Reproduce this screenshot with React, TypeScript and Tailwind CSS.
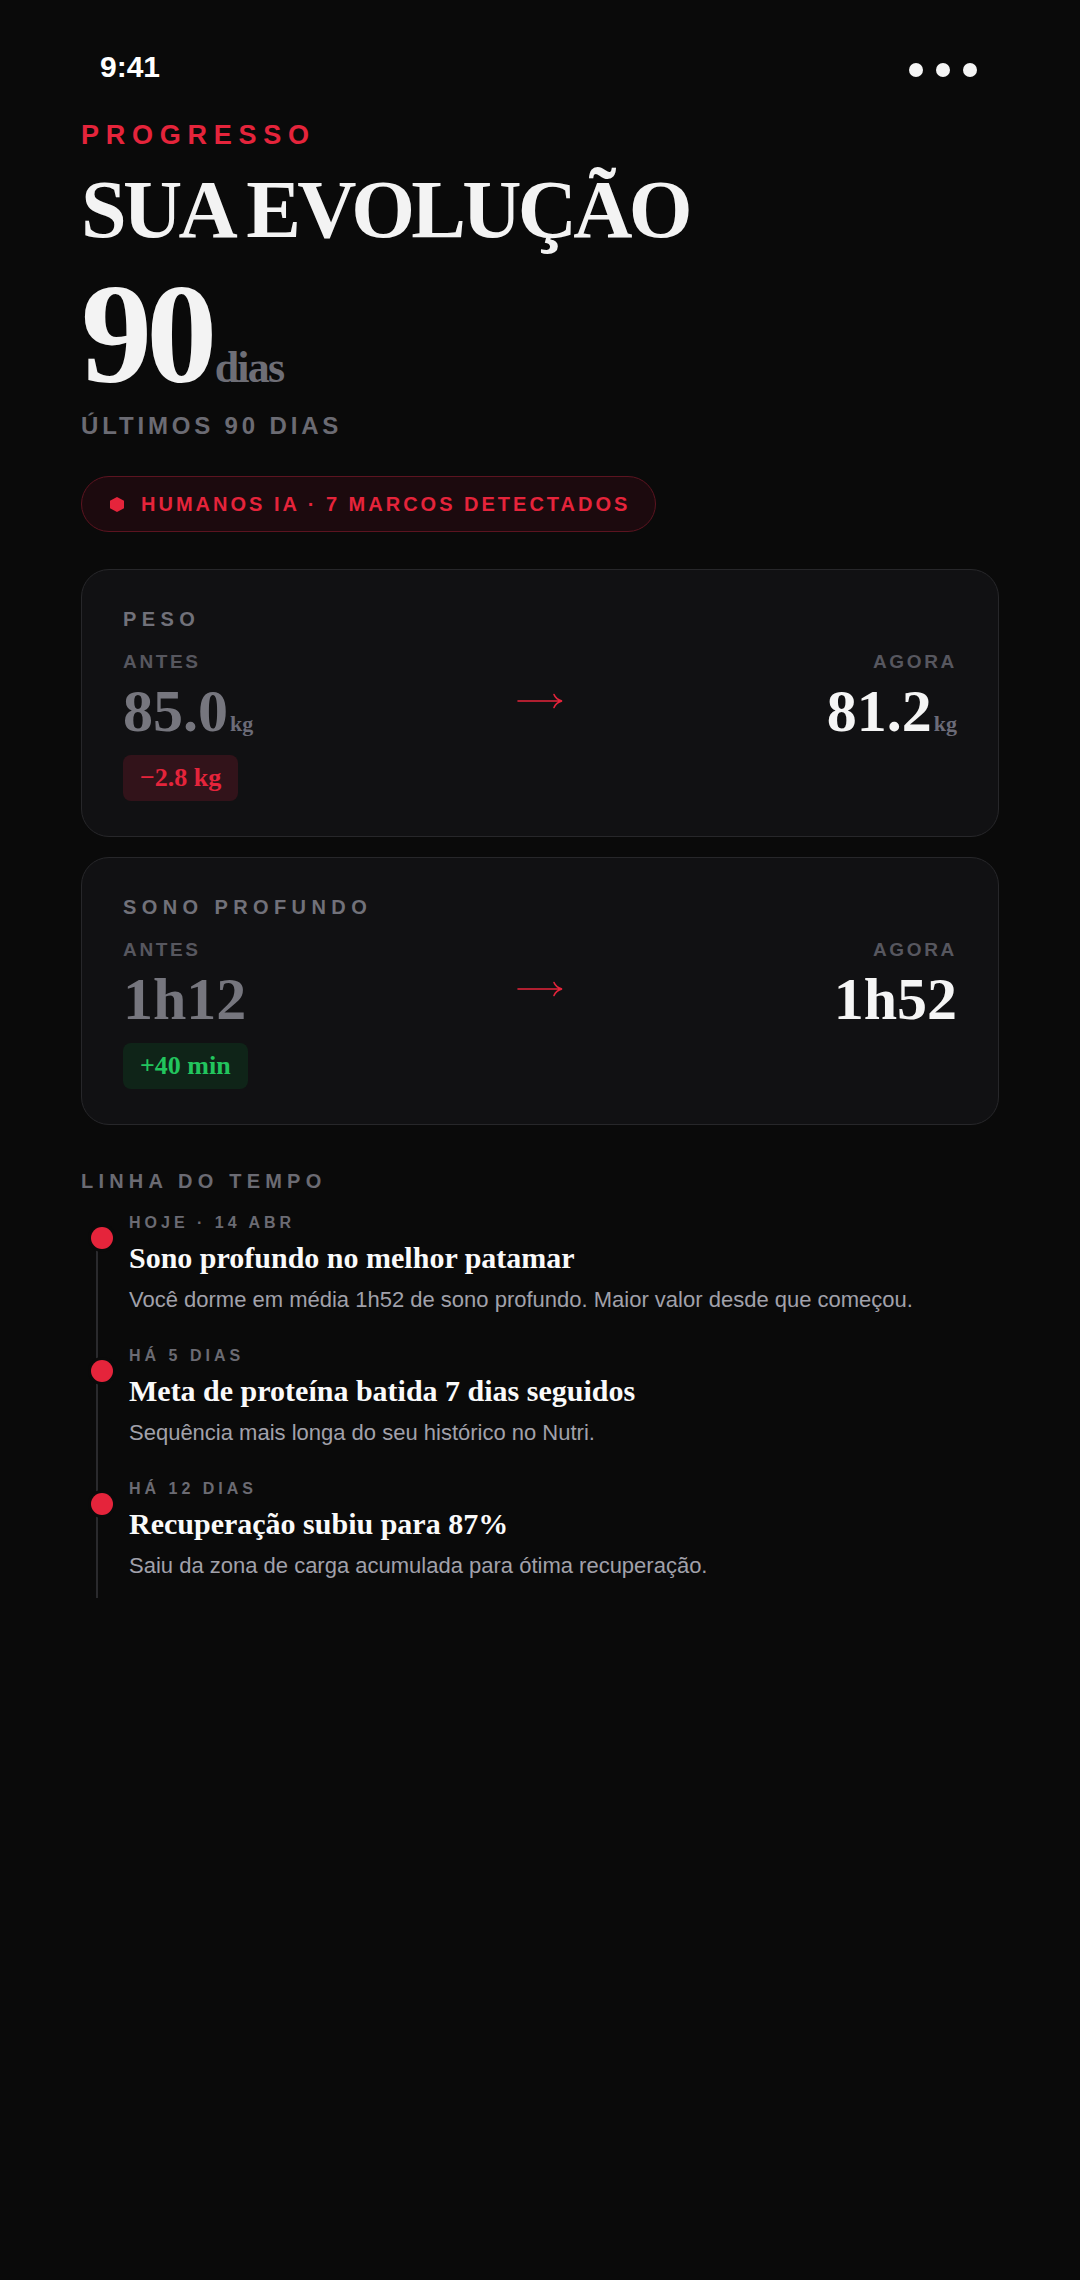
type Metric = {
  label: string;
  before: string;
  after: string;
  unit?: string;
  delta: string;
  tone: "red" | "green";
};

const metrics: Metric[] = [
  { label: "PESO", before: "85.0", after: "81.2", unit: "kg", delta: "−2.8 kg", tone: "red" },
  { label: "SONO PROFUNDO", before: "1h12", after: "1h52", delta: "+40 min", tone: "green" },
];

const events = [
  {
    when: "HOJE · 14 ABR",
    title: "Sono profundo no melhor patamar",
    text: "Você dorme em média 1h52 de sono profundo. Maior valor desde que começou.",
  },
  {
    when: "HÁ 5 DIAS",
    title: "Meta de proteína batida 7 dias seguidos",
    text: "Sequência mais longa do seu histórico no Nutri.",
  },
  {
    when: "HÁ 12 DIAS",
    title: "Recuperação subiu para 87%",
    text: "Saiu da zona de carga acumulada para ótima recuperação.",
  },
];

const Arrow = () => (
  <svg width="46" height="18" viewBox="0 0 46 18" fill="none">
    <path d="M1 9 H44 M37 2.5 Q39 7.5 45 9 Q39 10.5 37 15.5" stroke="#e5243b" strokeWidth="1.6" strokeLinecap="round" />
  </svg>
);

const MetricCard = ({ m }: { m: Metric }) => {
  const badge =
    m.tone === "red" ? "bg-[#32131a] text-[#e5243b]" : "bg-[#0f2418] text-[#22c55e]";
  return (
    <div className="rounded-[28px] border border-[#27272a] bg-[#111113] px-[41px] pt-[39px] pb-[35px]">
      <p className="text-[20px] leading-none font-bold tracking-[0.27em] text-[#71717a]">{m.label}</p>
      <div className="mt-[23px] grid grid-cols-[1fr_auto_1fr]">
        <div>
          <p className="text-[19px] leading-none font-bold tracking-[0.14em] text-[#57575f]">ANTES</p>
          <div className="mt-[10px] flex items-baseline font-['Liberation_Serif',serif] font-bold">
            <span className="text-[60px] leading-none text-[#76767e]">{m.before}</span>
            {m.unit && <span className="ml-[2px] text-[22px] leading-none text-[#6b6b78]">{m.unit}</span>}
          </div>
          <div className={`mt-[14px] flex h-[46px] w-fit items-center rounded-[8px] px-[17px] font-['Liberation_Serif',serif] text-[26px] leading-none font-bold ${badge}`}>
            {m.delta}
          </div>
        </div>
        <div className="pt-[40px]">
          <Arrow />
        </div>
        <div className="flex flex-col items-end">
          <p className="text-[19px] leading-none font-bold tracking-[0.14em] text-[#57575f]">AGORA</p>
          <div className="mt-[10px] flex items-baseline font-['Liberation_Serif',serif] font-bold">
            <span className="text-[60px] leading-none text-[#f5f5f5]">{m.after}</span>
            {m.unit && <span className="ml-[2px] text-[22px] leading-none text-[#6b6b78]">{m.unit}</span>}
          </div>
        </div>
      </div>
    </div>
  );
};

export default function App() {
  return (
    <div className="min-h-[2280px] w-full bg-[#0a0a0a] font-['Liberation_Sans',Arial,sans-serif]">
      {/* status bar */}
      <div className="flex justify-between pt-[52px] pr-[103px] pl-[100px]">
        <span className="text-[30px] leading-none font-bold text-white">9:41</span>
        <div className="mt-[11px] flex gap-[13px]">
          <span className="h-[14px] w-[14px] rounded-full bg-[#f5f5f5]" />
          <span className="h-[14px] w-[14px] rounded-full bg-[#f5f5f5]" />
          <span className="h-[14px] w-[14px] rounded-full bg-[#f5f5f5]" />
        </div>
      </div>

      <main className="px-[81px]">
        <p className="mt-[40px] text-[27px] leading-none font-bold tracking-[0.25em] text-[#e5243b]">PROGRESSO</p>
        <h1 className="mt-[20px] font-['Liberation_Serif',serif] text-[82px] leading-none font-bold tracking-[-0.045em] text-[#f3f3f3]">
          SUA EVOLUÇÃO
        </h1>
        <div className="mt-[12px] flex items-baseline font-['Liberation_Serif',serif] font-bold">
          <span className="text-[142px] leading-none tracking-[-0.04em] text-[#f3f3f3]">90</span>
          <span className="ml-[3px] text-[44px] leading-none tracking-[-0.04em] text-[#6e6e76]">dias</span>
        </div>
        <p className="mt-[9px] text-[24px] leading-none font-bold tracking-[0.16em] text-[#6b6b73]">ÚLTIMOS 90 DIAS</p>

        <div className="mt-[38px] flex h-[56px] w-fit items-center gap-[17px] rounded-full border border-[#5c1420] bg-[#1c0a0e] pr-[25px] pl-[28px]">
          <svg width="14" height="15" viewBox="0 0 14 15">
            <polygon points="7,0 14,3.75 14,11.25 7,15 0,11.25 0,3.75" fill="#e5243b" />
          </svg>
          <span className="text-[20px] leading-none font-bold tracking-[0.15em] text-[#e5243b]">
            HUMANOS IA · 7 MARCOS DETECTADOS
          </span>
        </div>

        <div className="mt-[37px] flex flex-col gap-[20px]">
          {metrics.map((m) => (
            <MetricCard key={m.label} m={m} />
          ))}
        </div>

        <p className="mt-[46px] text-[20px] leading-none font-bold tracking-[0.26em] text-[#6b6b73]">LINHA DO TEMPO</p>

        <div className="relative mt-[24px] pb-[21px] pl-[48px]">
          <div className="absolute top-[22px] bottom-0 left-[15px] w-[2px] bg-[#2a2a2d]" />
          {events.map((e, i) => (
            <div key={i} className={`relative ${i > 0 ? "mt-[37px]" : ""}`}>
              <span className="absolute top-[12px] left-[-38px] h-[22px] w-[22px] rounded-full bg-[#e5243b] ring-[3px] ring-[#0a0a0a]" />
              <p className="text-[16px] leading-none font-bold tracking-[0.25em] text-[#6b6b73]">{e.when}</p>
              <p className="mt-[12px] font-['Liberation_Serif',serif] text-[30px] leading-none font-bold text-[#fafafa]">
                {e.title}
              </p>
              <p className="mt-[16px] text-[22px] leading-none text-[#a1a1aa]">{e.text}</p>
            </div>
          ))}
        </div>
      </main>
    </div>
  );
}
